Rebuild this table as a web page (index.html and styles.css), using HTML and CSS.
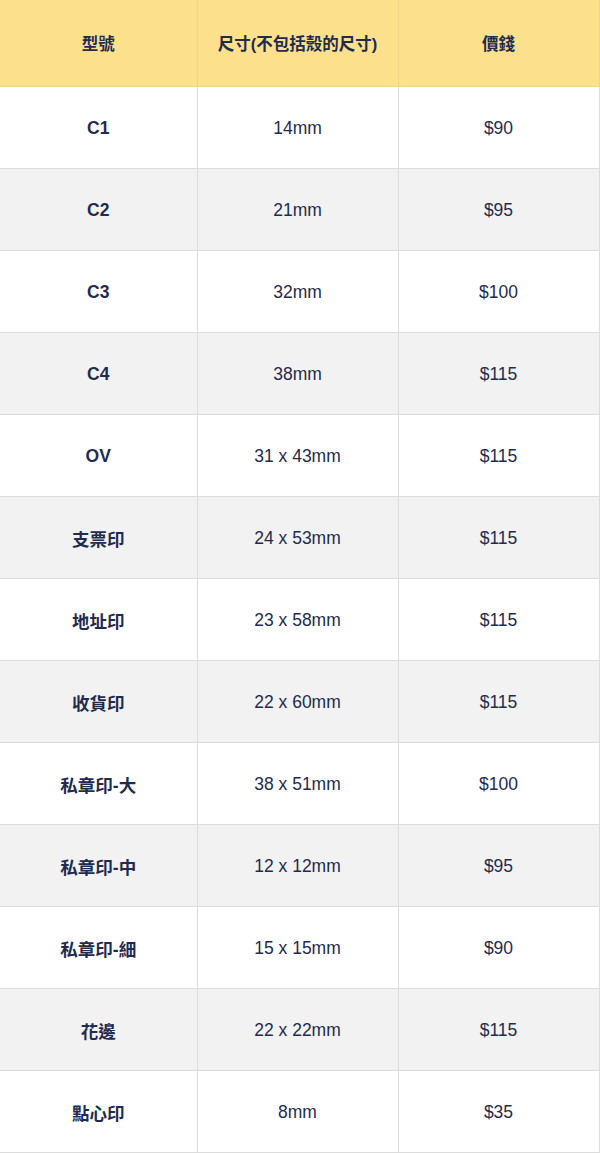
FILE: index.html
```html
<!DOCTYPE html>
<html lang="zh-Hant">
<head>
  <meta charset="UTF-8" />
  <meta name="viewport" content="width=device-width, initial-scale=1.0"/>
  <title>印章價錢表</title>
  <link rel="stylesheet" href="styles.css">
</head>
<body>

  <!-- Price table -->
  <table class="price-table">
    <colgroup>
      <col class="col-model">
      <col class="col-size">
      <col class="col-price">
    </colgroup>
    <thead>
      <tr>
        <th>型號</th>
        <th>尺寸(不包括殼的尺寸)</th>
        <th>價錢</th>
      </tr>
    </thead>
    <tbody>
      <tr><td class="model">C1</td><td>14mm</td><td>$90</td></tr>
      <tr><td class="model">C2</td><td>21mm</td><td>$95</td></tr>
      <tr><td class="model">C3</td><td>32mm</td><td>$100</td></tr>
      <tr><td class="model">C4</td><td>38mm</td><td>$115</td></tr>
      <tr><td class="model">OV</td><td>31 x 43mm</td><td>$115</td></tr>
      <tr><td class="model">支票印</td><td>24 x 53mm</td><td>$115</td></tr>
      <tr><td class="model">地址印</td><td>23 x 58mm</td><td>$115</td></tr>
      <tr><td class="model">收貨印</td><td>22 x 60mm</td><td>$115</td></tr>
      <tr><td class="model">私章印-大</td><td>38 x 51mm</td><td>$100</td></tr>
      <tr><td class="model">私章印-中</td><td>12 x 12mm</td><td>$95</td></tr>
      <tr><td class="model">私章印-細</td><td>15 x 15mm</td><td>$90</td></tr>
      <tr><td class="model">花邊</td><td>22 x 22mm</td><td>$115</td></tr>
      <tr><td class="model">點心印</td><td>8mm</td><td>$35</td></tr>
    </tbody>
  </table>

</body>
</html>
```

FILE: styles.css
```css
/* General styles */
body {
  font-family: "Liberation Sans", Arial, "Noto Sans CJK TC", sans-serif;
  margin: 0; padding: 0;
  background: #fff;
  color: #1f2b50;
}

/* Table */
.price-table {
  width: 599px;
  border-collapse: collapse;
  table-layout: fixed;
  font-size: 17.5px;
}

.col-model { width: 197px; }
.col-size { width: 201px; }
.col-price { width: 201px; }

.price-table th,
.price-table td {
  border: 1px solid #dcdcdc;
  text-align: center;
  vertical-align: middle;
  padding: 0;
}

.price-table tr:first-child th,
.price-table tr:first-child td {
  border-top: none;
}

.price-table th:first-child,
.price-table td:first-child {
  border-left: none;
}

.price-table th {
  background: #fde08b;
  border-color: #eed58a;
  height: 86px;
  font-size: 16.5px;
  font-weight: bold;
}

.price-table td {
  height: 79px;
  padding-top: 2px;
}

.price-table .model {
  font-weight: bold;
}

.price-table tbody tr:nth-child(even) td {
  background: #f2f2f2;
}
```
